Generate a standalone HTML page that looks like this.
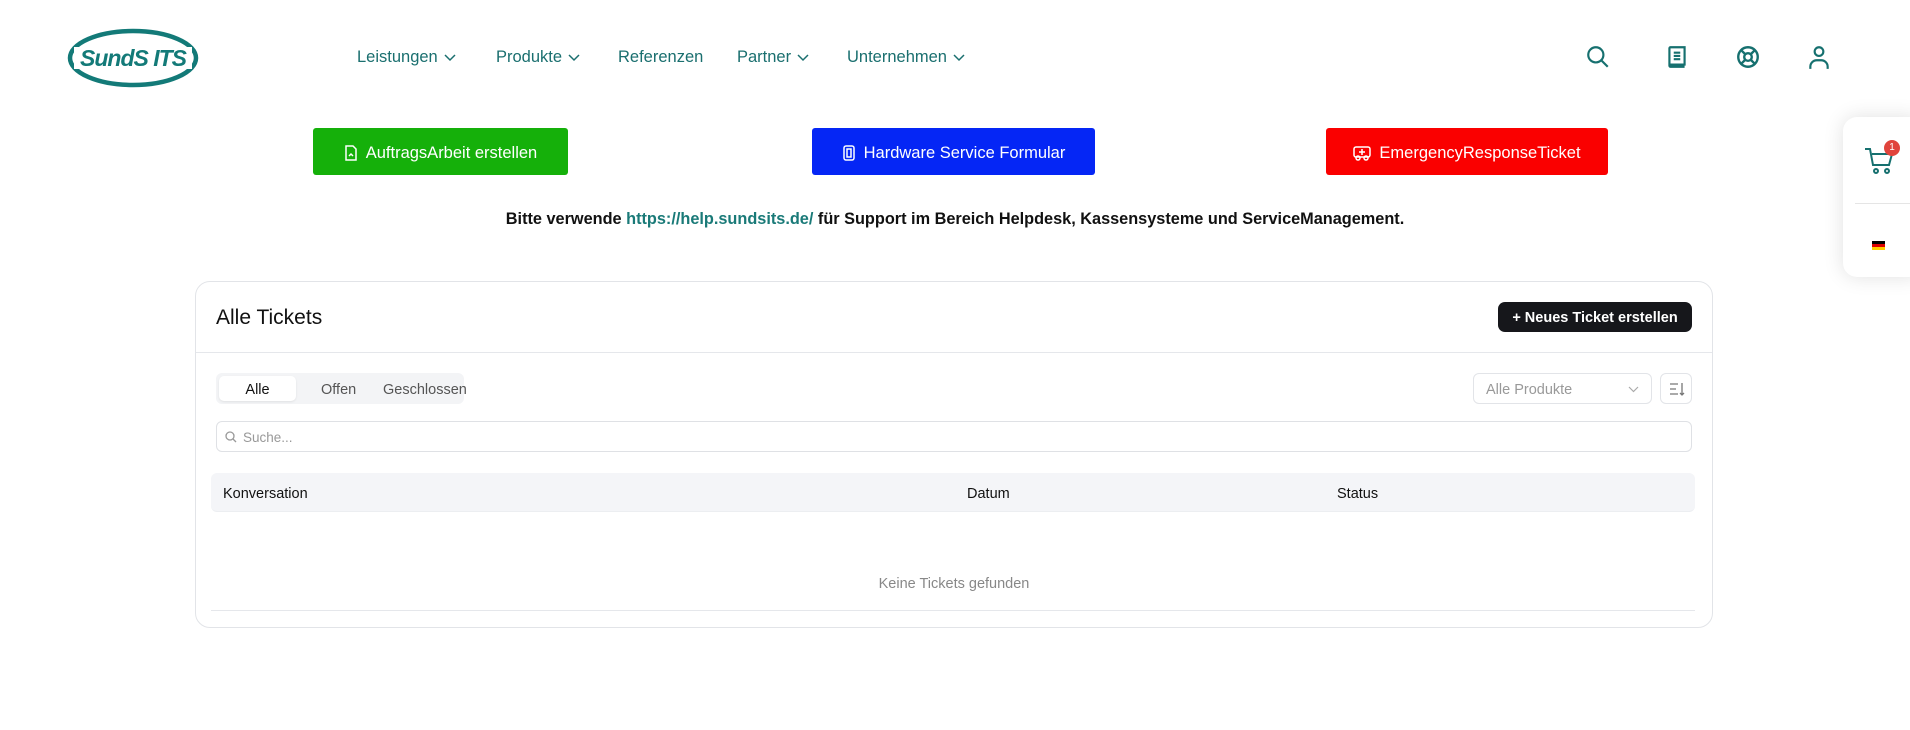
<!DOCTYPE html>
<html><head><meta charset="utf-8"><style>
*{box-sizing:border-box;margin:0;padding:0}
body{width:1910px;height:730px;background:#fff;font-family:"Liberation Sans",sans-serif;position:relative;overflow:hidden;color:#111}
.a{position:absolute}
.nav{top:48px;font-size:16.5px;color:#1a6f6f;white-space:nowrap}
.nav svg{vertical-align:middle;margin-left:6px}
.btn{top:128px;height:47px;border-radius:3px;color:#fff;font-size:16.5px;display:flex;align-items:center;justify-content:center;gap:8px;padding-top:3px}
.ic{top:44px}
</style></head><body>
<svg class="a" style="left:66px;top:28px" width="134" height="60" viewBox="0 0 134 60">
<ellipse cx="67" cy="30" rx="63" ry="27" fill="none" stroke="#137a78" stroke-width="4.5"/>
<rect x="8" y="19" width="118" height="22" fill="#fff"/>
<text x="67" y="38" text-anchor="middle" font-family="Liberation Sans" font-style="italic" font-weight="bold" font-size="23" fill="#137a78" letter-spacing="-1">SundS ITS</text>
</svg>
<div class="a nav" style="left:357px">Leistungen<svg width="12" height="8" viewBox="0 0 12 8"><path d="M1 1l5 5 5-5" fill="none" stroke="#1a6f6f" stroke-width="1.5"/></svg></div>
<div class="a nav" style="left:496px">Produkte<svg width="12" height="8" viewBox="0 0 12 8"><path d="M1 1l5 5 5-5" fill="none" stroke="#1a6f6f" stroke-width="1.5"/></svg></div>
<div class="a nav" style="left:618px">Referenzen</div>
<div class="a nav" style="left:737px">Partner<svg width="12" height="8" viewBox="0 0 12 8"><path d="M1 1l5 5 5-5" fill="none" stroke="#1a6f6f" stroke-width="1.5"/></svg></div>
<div class="a nav" style="left:847px">Unternehmen<svg width="12" height="8" viewBox="0 0 12 8"><path d="M1 1l5 5 5-5" fill="none" stroke="#1a6f6f" stroke-width="1.5"/></svg></div>
<svg class="a ic" style="left:1585px" width="26" height="26" viewBox="0 0 24 24" fill="none" stroke="#16706f" stroke-width="2"><circle cx="10" cy="10" r="7"/><path d="M15 15l6 6"/></svg>
<svg class="a ic" style="left:1664px" width="26" height="26" viewBox="0 0 24 24" fill="none" stroke="#16706f" stroke-width="2"><path d="M5 20V4a1 1 0 011-1h13v16H6a1 1 0 00-1 1 1 1 0 001 1h13"/><path d="M9 8h6M9 11h6M9 14h6"/></svg>
<svg class="a ic" style="left:1735px" width="26" height="26" viewBox="0 0 24 24" fill="none" stroke="#16706f" stroke-width="2.2"><circle cx="12" cy="12" r="9"/><circle cx="12" cy="12" r="3.5"/><path d="M5.6 5.6l4 4M14.4 14.4l4 4M18.4 5.6l-4 4M9.6 14.4l-4 4"/></svg>
<svg class="a ic" style="left:1806px" width="26" height="26" viewBox="0 0 24 24" fill="none" stroke="#16706f" stroke-width="2"><circle cx="12" cy="7" r="4"/><path d="M4 23v-2a6 6 0 016-6h4a6 6 0 016 6v2"/></svg>

<div class="a btn" style="left:313px;width:255px;background:#15b00a"><svg width="14" height="16" viewBox="0 0 14 16" fill="none" stroke="#fff" stroke-width="1.5"><path d="M2 1h7l3 3v11H2z"/><path d="M5 11l2-2 2 2"/></svg>AuftragsArbeit erstellen</div>
<div class="a btn" style="left:812px;width:283px;background:#0526f5"><svg width="14" height="16" viewBox="0 0 14 16" fill="none" stroke="#fff" stroke-width="1.5"><rect x="2" y="1" width="10" height="14" rx="2"/><rect x="5" y="4" width="4" height="8"/></svg>Hardware Service Formular</div>
<div class="a btn" style="left:1326px;width:282px;background:#fa0000"><svg width="18" height="16" viewBox="0 0 18 16" fill="none" stroke="#fff" stroke-width="1.5"><rect x="1" y="2" width="16" height="10" rx="2"/><circle cx="5" cy="13" r="2"/><circle cx="13" cy="13" r="2"/><path d="M9 4v6M6 7h6"/></svg>EmergencyResponseTicket</div>

<div class="a" style="left:0;width:1910px;top:210px;text-align:center;font-size:16.3px;font-weight:bold;color:#111">Bitte verwende <span style="color:#1a7a78">https://help.sundsits.de/</span> für Support im Bereich Helpdesk, Kassensysteme und ServiceManagement.</div>

<div class="a" style="left:1843px;top:117px;width:80px;height:160px;background:#fff;border-radius:14px;box-shadow:0 0 20px rgba(0,0,0,.12)"></div>
<svg class="a" style="left:1864px;top:146px" width="32" height="30" viewBox="0 0 32 30" fill="none" stroke="#16706f" stroke-width="2"><path d="M1 3h5l3 16h16l3-11H8"/><circle cx="12" cy="25" r="2"/><circle cx="23" cy="25" r="2"/></svg>
<div class="a" style="left:1884px;top:140px;width:16px;height:16px;border-radius:50%;background:#e0443c;color:#fff;font-size:10px;text-align:center;line-height:16px">1</div>
<div class="a" style="left:1855px;top:203px;width:55px;height:1px;background:#e5e5e5"></div>
<div class="a" style="left:1872px;top:241px;width:13px;height:9px;background:linear-gradient(#000 0 33%,#d00 33% 66%,#fc0 66%)"></div>

<div class="a" style="left:195px;top:281px;width:1518px;height:347px;border:1px solid #e2e4e8;border-radius:15px"></div>
<div class="a" style="left:216px;top:306px;font-size:21px;color:#111">Alle Tickets</div>
<div class="a" style="left:1498px;top:302px;width:194px;height:30px;background:#16171b;border-radius:7px;color:#fff;font-size:14.5px;font-weight:bold;text-align:center;line-height:32px">+ Neues Ticket erstellen</div>
<div class="a" style="left:196px;top:352px;width:1516px;height:1px;background:#e5e7eb"></div>
<div class="a" style="left:216px;top:373px;width:248px;height:31px;background:#f3f4f6;border-radius:6px"></div>
<div class="a" style="left:219px;top:376px;width:77px;height:25px;background:#fff;border-radius:5px;box-shadow:0 1px 2px rgba(0,0,0,.08)"></div>
<div class="a" style="left:219px;top:382px;width:77px;text-align:center;font-size:14.5px;color:#111">Alle</div>
<div class="a" style="left:321px;top:382px;font-size:14.5px;color:#555">Offen</div>
<div class="a" style="left:383px;top:382px;font-size:14.5px;color:#555">Geschlossen</div>
<div class="a" style="left:1473px;top:373px;width:179px;height:31px;border:1px solid #e2e4e8;border-radius:6px;font-size:14.5px;color:#999;padding:8px 12px">Alle Produkte<svg style="position:absolute;right:12px;top:12px" width="11" height="7" viewBox="0 0 11 7"><path d="M1 1l4.5 4.5L10 1" fill="none" stroke="#aaa" stroke-width="1.2"/></svg></div>
<div class="a" style="left:1660px;top:373px;width:32px;height:31px;border:1px solid #e2e4e8;border-radius:6px"><svg style="margin:7px 8px" width="16" height="16" viewBox="0 0 16 16" fill="none" stroke="#777" stroke-width="1.3"><path d="M1 3h8M1 8h6M1 13h8M13 2v12M11 12l2 2 2-2"/></svg></div>
<div class="a" style="left:216px;top:421px;width:1476px;height:31px;border:1px solid #dfe1e5;border-radius:6px;font-size:13.5px;color:#999;padding:8px 0 0 26px">Suche...<svg style="position:absolute;left:8px;top:9px" width="12" height="12" viewBox="0 0 12 12" fill="none" stroke="#999" stroke-width="1.3"><circle cx="5" cy="5" r="4"/><path d="M8 8l3 3"/></svg></div>
<div class="a" style="left:211px;top:473px;width:1484px;height:39px;background:#f4f5f8;border-radius:6px;border-bottom:1px solid #eceef1"></div>
<div class="a" style="left:223px;top:486px;font-size:14.5px;color:#111">Konversation</div>
<div class="a" style="left:967px;top:486px;font-size:14.5px;color:#111">Datum</div>
<div class="a" style="left:1337px;top:486px;font-size:14.5px;color:#111">Status</div>
<div class="a" style="left:0;width:1908px;top:576px;text-align:center;font-size:14.5px;color:#888">Keine Tickets gefunden</div>
<div class="a" style="left:211px;top:610px;width:1484px;height:1px;background:#e5e7eb"></div>
</body></html>
